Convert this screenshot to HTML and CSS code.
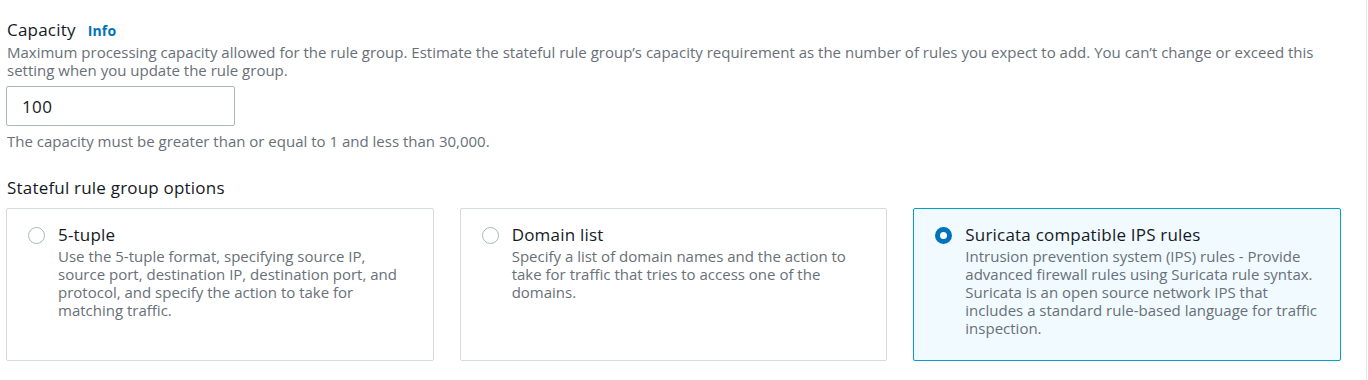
FILE: index.html
```html
<!DOCTYPE html>
<html lang="en">
<head>
<meta charset="utf-8">
<title>Capacity</title>
<link rel="stylesheet" href="styles.css">
</head>
<body>
<main class="page">
  <section class="field">
    <div class="label-row">
      <span class="label">Capacity</span>
      <a class="info" href="#">Info</a>
    </div>
    <p class="desc">Maximum processing capacity allowed for the rule group. Estimate the stateful rule group’s capacity requirement as the number of rules you expect to add. You can’t change or exceed this setting when you update the rule group.</p>
    <div class="input">100</div>
    <p class="hint">The capacity must be greater than or equal to 1 and less than 30,000.</p>
  </section>
  <section class="field options">
    <div class="label">Stateful rule group options</div>
    <div class="tiles">
      <div class="tile">
        <span class="radio"></span>
        <div class="tile-body">
          <div class="tile-title">5-tuple</div>
          <div class="tile-desc">Use the 5-tuple format, specifying source IP, source port, destination IP, destination port, and protocol, and specify the action to take for matching traffic.</div>
        </div>
      </div>
      <div class="tile">
        <span class="radio"></span>
        <div class="tile-body">
          <div class="tile-title">Domain list</div>
          <div class="tile-desc">Specify a list of domain names and the action to take for traffic that tries to access one of the domains.</div>
        </div>
      </div>
      <div class="tile selected">
        <span class="radio checked"></span>
        <div class="tile-body">
          <div class="tile-title">Suricata compatible IPS rules</div>
          <div class="tile-desc">Intrusion prevention system (IPS) rules - Provide advanced firewall rules using Suricata rule syntax. Suricata is an open source network IPS that includes a standard rule-based language for traffic inspection.</div>
        </div>
      </div>
    </div>
  </section>
</main>
</body>
</html>
```
FILE: styles.css
```css
* { box-sizing: border-box; }
html, body { margin: 0; padding: 0; background: #fff; }
body {
  font-family: "Open Sans", "Noto Sans", sans-serif;
  color: #16191f;
  width: 1368px;
  height: 380px;
  overflow: hidden;
}
.page {
  padding: 19px 27px 0 7px;
  border-right: 1px solid #e4e6e8;
  width: 1367px;
  height: 380px;
}
.label-row { display: flex; align-items: baseline; gap: 12px; }
.label { font-size: 17px; line-height: 22px; letter-spacing: 0.2px; }
.info { font-size: 14px; font-weight: 700; color: #0073bb; text-decoration: none; letter-spacing: 0.2px; }
.desc { margin: 2px 0 0; font-size: 15px; line-height: 18px; color: #687078; }
.input {
  margin: 7px 0 0 -1px;
  width: 229px;
  height: 40px;
  border: 1px solid #aab7b8;
  border-radius: 2px;
  padding: 0 15px;
  display: flex;
  align-items: center;
  font-size: 17px;
  letter-spacing: 0.4px;
}
.hint { margin: 6px 0 0; font-size: 15px; line-height: 18px; color: #687078; }
.options { margin-top: 27px; }
.tiles {
  margin: 9px 0 0 -1px;
  display: grid;
  grid-template-columns: repeat(3, 1fr);
  gap: 26px;
  width: 1335px;
}
.tile {
  display: flex;
  gap: 13px;
  border: 1px solid #d5dbdb;
  border-radius: 2px;
  padding: 15px 20px 18px 21px;
  height: 153px;
}
.tile.selected { border-color: #00a1c9; background: #f1faff; }
.radio {
  flex: none;
  width: 17px;
  height: 17px;
  margin-top: 3px;
  border: 1px solid #aab7b8;
  border-radius: 50%;
  background: #fff;
}
.radio.checked { border: 5px solid #0073bb; }
.tile-title { font-size: 17px; line-height: 22px; letter-spacing: 0.2px; }
.tile-desc { margin-top: 1px; font-size: 15px; line-height: 18px; color: #687078; }
```
